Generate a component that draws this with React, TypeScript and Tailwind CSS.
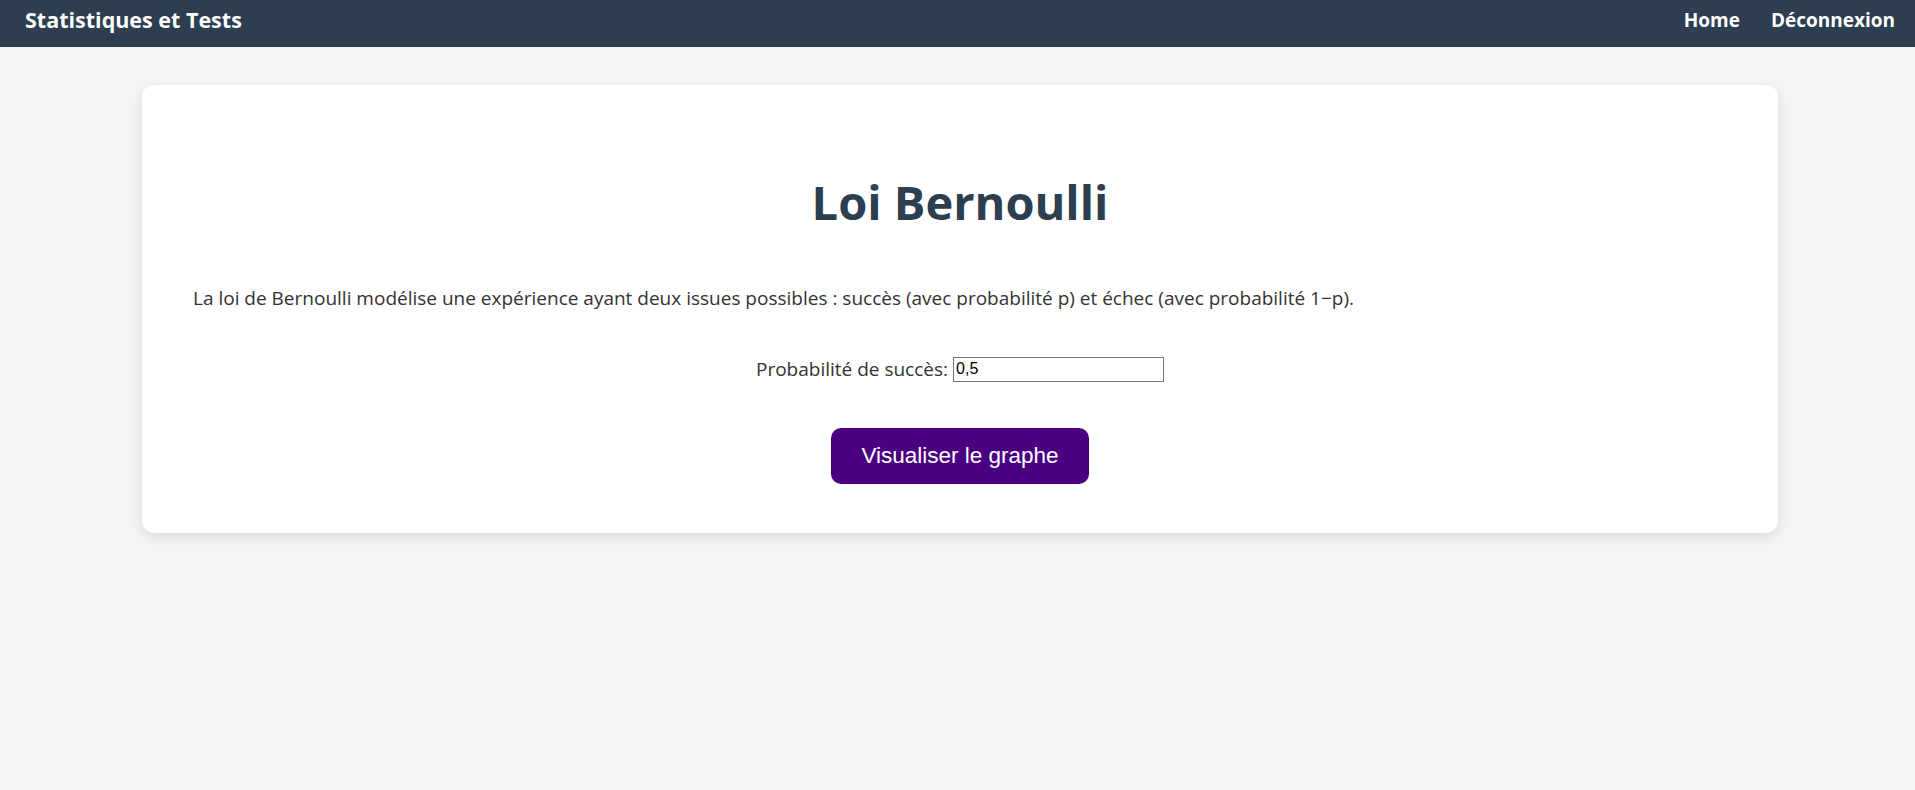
import React from "react";

export default function App() {
  return (
    <div className="min-h-[790px] bg-[#f4f4f4]" style={{ fontFamily: '"Open Sans", "Noto Sans", sans-serif' }}>
      <nav className="flex h-[47px] items-center justify-between bg-[#2c3e50] pb-[6px] pl-[25px] pr-[20px] text-white">
        <span className="text-[21.5px] font-bold">Statistiques et Tests</span>
        <div className="flex gap-[31px] text-[19px] font-bold">
          <span>Home</span>
          <span>Déconnexion</span>
        </div>
      </nav>
      <div className="pl-[142px] pr-[137px] pt-[38px]">
        <div className="rounded-[12px] bg-white px-[51px] pb-[49px] pt-[87px] shadow-[0_4px_12px_rgba(0,0,0,0.1)]">
          <h1 className="text-center text-[47px] font-bold leading-[60px] text-[#2c3e50]">Loi Bernoulli</h1>
          <p className="mt-[53px] text-[19px] leading-[26px] text-[#333]">
            La loi de Bernoulli modélise une expérience ayant deux issues possibles : succès (avec probabilité p) et échec (avec probabilité 1−p).
          </p>
          <div className="mt-[45px] flex h-[26px] items-center justify-center gap-[5px] text-[19px] text-[#333]">
            <label>Probabilité de succès:</label>
            <input
              defaultValue="0,5"
              className="h-[25px] w-[211px] border border-[#767676] px-[2px] text-[16px] text-black"
              style={{ fontFamily: '"Liberation Sans", Arial, sans-serif' }}
            />
          </div>
          <div className="mt-[46px] flex justify-center">
            <button
              className="h-[56px] w-[258px] rounded-[10px] bg-[#4b0082] text-[22.5px] text-white"
              style={{ fontFamily: '"Liberation Sans", Arial, sans-serif' }}
            >
              Visualiser le graphe
            </button>
          </div>
        </div>
      </div>
    </div>
  );
}
